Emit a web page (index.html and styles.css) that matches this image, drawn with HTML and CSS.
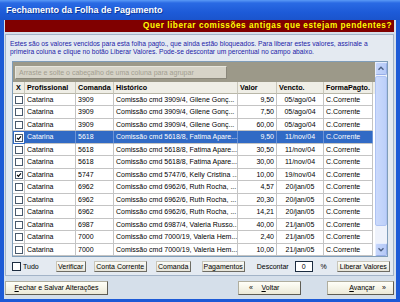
FILE: index.html
```html
<!DOCTYPE html>
<html>
<head>
<meta charset="utf-8">
<link rel="stylesheet" href="styles.css">
</head>
<body>
<div class="window">
  <div class="titlebar">Fechamento da Folha de Pagamento</div>
  <div class="client">
    <div class="banner">Quer liberar comissões antigas que estejam pendentes?</div>
    <div class="panel">
      <p class="desc">Estes são os valores vencidos para esta folha pagto., que ainda estão bloqueados. Para liberar estes valores, assinale a primeira coluna e clique no botão Liberar Valores. Pode-se descontar um percentual no campo abaixo.</p>
      <div class="grid">
        <div class="grid-main">
          <div class="groupbox"><span class="dragbox">Arraste e solte o cabeçalho de uma coluna para agrupar</span></div>
          <div class="row head">
            <div class="c cx">X</div><div class="c">Profissional</div><div class="c">Comanda</div><div class="c">Histórico</div><div class="c">Valor</div><div class="c">Vencto.</div><div class="c">FormaPagto.</div>
          </div>
          <div class="row"><div class="c cx"><span class="cb"></span></div><div class="c">Catarina</div><div class="c">3909</div><div class="c">Comissão cmd 3909/4, Gilene Gonç...</div><div class="c r">9,50</div><div class="c m">05/ago/04</div><div class="c">C.Corrente</div></div>
          <div class="row"><div class="c cx"><span class="cb"></span></div><div class="c">Catarina</div><div class="c">3909</div><div class="c">Comissão cmd 3909/4, Gilene Gonç...</div><div class="c r">7,50</div><div class="c m">05/ago/04</div><div class="c">C.Corrente</div></div>
          <div class="row"><div class="c cx"><span class="cb"></span></div><div class="c">Catarina</div><div class="c">3909</div><div class="c">Comissão cmd 3909/4, Gilene Gonç...</div><div class="c r">60,00</div><div class="c m">05/ago/04</div><div class="c">C.Corrente</div></div>
          <div class="row sel"><div class="c cx"><span class="cb on"><svg viewBox="0 0 8 8"><path d="M1.4 3.9 L3.2 5.8 L6.6 1.9"/></svg></span></div><div class="c">Catarina</div><div class="c">5618</div><div class="c">Comissão cmd 5618/8, Fatima Apare...</div><div class="c r">9,50</div><div class="c m">11/nov/04</div><div class="c">C.Corrente</div></div>
          <div class="row"><div class="c cx"><span class="cb"></span></div><div class="c">Catarina</div><div class="c">5618</div><div class="c">Comissão cmd 5618/8, Fatima Apare...</div><div class="c r">30,50</div><div class="c m">11/nov/04</div><div class="c">C.Corrente</div></div>
          <div class="row"><div class="c cx"><span class="cb"></span></div><div class="c">Catarina</div><div class="c">5618</div><div class="c">Comissão cmd 5618/8, Fatima Apare...</div><div class="c r">30,00</div><div class="c m">11/nov/04</div><div class="c">C.Corrente</div></div>
          <div class="row"><div class="c cx"><span class="cb on"><svg viewBox="0 0 8 8"><path d="M1.4 3.9 L3.2 5.8 L6.6 1.9"/></svg></span></div><div class="c">Catarina</div><div class="c">5747</div><div class="c">Comissão cmd 5747/6, Kelly Cristina ...</div><div class="c r">10,00</div><div class="c m">19/nov/04</div><div class="c">C.Corrente</div></div>
          <div class="row"><div class="c cx"><span class="cb"></span></div><div class="c">Catarina</div><div class="c">6962</div><div class="c">Comissão cmd 6962/6, Ruth Rocha, ...</div><div class="c r">4,57</div><div class="c m">20/jan/05</div><div class="c">C.Corrente</div></div>
          <div class="row"><div class="c cx"><span class="cb"></span></div><div class="c">Catarina</div><div class="c">6962</div><div class="c">Comissão cmd 6962/6, Ruth Rocha, ...</div><div class="c r">20,30</div><div class="c m">20/jan/05</div><div class="c">C.Corrente</div></div>
          <div class="row"><div class="c cx"><span class="cb"></span></div><div class="c">Catarina</div><div class="c">6962</div><div class="c">Comissão cmd 6962/6, Ruth Rocha, ...</div><div class="c r">14,21</div><div class="c m">20/jan/05</div><div class="c">C.Corrente</div></div>
          <div class="row"><div class="c cx"><span class="cb"></span></div><div class="c">Catarina</div><div class="c">6987</div><div class="c">Comissão cmd 6987/4, Valeria Russo...</div><div class="c r">40,00</div><div class="c m">21/jan/05</div><div class="c">C.Corrente</div></div>
          <div class="row"><div class="c cx"><span class="cb"></span></div><div class="c">Catarina</div><div class="c">7000</div><div class="c">Comissão cmd 7000/19, Valeria Hem...</div><div class="c r">2,40</div><div class="c m">21/jan/05</div><div class="c">C.Corrente</div></div>
          <div class="row"><div class="c cx"><span class="cb"></span></div><div class="c">Catarina</div><div class="c">7000</div><div class="c">Comissão cmd 7000/19, Valeria Hem...</div><div class="c r">10,00</div><div class="c m">21/jan/05</div><div class="c">C.Corrente</div></div>
        </div>
        <div class="scrollbar">
          <div class="sbtn"><svg viewBox="0 0 10 10"><path d="M2.5 6.3 L5 3.8 L7.5 6.3"/></svg></div>
          <div class="track"><div class="thumb"></div></div>
          <div class="sbtn"><svg viewBox="0 0 10 10"><path d="M2.5 3.8 L5 6.3 L7.5 3.8"/></svg></div>
        </div>
      </div>
      <div class="toolbar">
        <span class="cb tb-cb"></span><span class="lbl tudo">Tudo</span>
        <button class="btn b-ver">Verificar</button>
        <button class="btn b-cc">Conta Corrente</button>
        <button class="btn b-com">Comanda</button>
        <button class="btn b-pag">Pagamentos</button>
        <span class="lbl desc-lbl">Descontar</span>
        <span class="input">0</span>
        <span class="lbl pct">%</span>
        <button class="btn b-lib">Liberar Valores</button>
      </div>
    </div>
    <div class="footer">
      <button class="btn fbtn b-fechar"><u>F</u>echar e Salvar Alterações</button>
      <span class="spacer"></span>
      <button class="btn fbtn b-voltar"><span>«</span><span><u>V</u>oltar</span><span></span></button>
      <button class="btn fbtn b-avancar"><span></span><span><u>A</u>vançar</span><span>»</span></button>
    </div>
  </div>
</div>
</body>
</html>
```

FILE: styles.css
```css
html, body {
  margin: 0;
  padding: 0;
}
body {
  width: 400px;
  height: 302px;
  overflow: hidden;
  font-family: "Liberation Sans", Arial, sans-serif;
}
.window {
  width: 400px;
  height: 302px;
  background: #1c5ad6;
  display: flex;
  flex-direction: column;
}
.titlebar {
  height: 20px;
  line-height: 21px;
  padding-left: 6px;
  color: #fff;
  font-weight: bold;
  font-size: 9px;
  background: linear-gradient(#5a9af6 0, #2a6ae4 3px, #1d5bd8 60%, #1a54cc 100%);
  text-shadow: 1px 1px 0 #0e3a9a;
}
.client {
  flex: 1;
  margin: 0 4px 3px 4px;
  padding: 0 2px 0 1px;
  background: #d5dfea;
  display: flex;
  flex-direction: column;
}
.banner {
  height: 12px;
  line-height: 12px;
  background: #800000;
  color: #ffff00;
  font-weight: bold;
  font-size: 8.2px;
  letter-spacing: 0.55px;
  text-align: right;
  padding-right: 2px;
  white-space: nowrap;
}
.panel {
  margin-top: 2px;
  height: 242px;
  box-sizing: border-box;
  border: 1px solid #a3b4c8;
  background: #e4eaf1;
  display: flex;
  flex-direction: column;
}
.desc {
  margin: 5px 2px 0 4px;
  font-size: 6.7px;
  line-height: 7.6px;
  color: #1c1ca8;
}
.grid {
  margin: 6px 0 0 6px;
  width: 376px;
  height: 196px;
  box-sizing: border-box;
  border: 1px solid #7f9db9;
  display: flex;
  background: #fff;
}
.grid-main {
  width: 362px;
  display: flex;
  flex-direction: column;
}
.groupbox {
  height: 20px;
  background: #9c9989;
  padding: 4px 0 0 2px;
  box-sizing: border-box;
}
.dragbox {
  display: block;
  width: 212px;
  height: 13px;
  box-sizing: border-box;
  background: #d6d3c7;
  border: 1px solid #e8e6dc;
  border-right-color: #8a877a;
  border-bottom-color: #8a877a;
  color: #a29e90;
  font-size: 7px;
  line-height: 11px;
  padding-left: 3px;
  white-space: nowrap;
}
.row {
  display: grid;
  grid-template-columns: 12px 51px 38px 124px 39px 47px 49px;
  height: 12.5px;
  font-size: 7px;
  line-height: 11.5px;
  color: #000;
}
.row.head {
  height: 12px;
  font-weight: bold;
  background: #efeee6;
  font-size: 7.2px;
}
.row.head .c {
  border-right: 1px solid #c9c7ba;
  border-bottom: 1px solid #b9b7a8;
  line-height: 11px;
}
.c {
  box-sizing: border-box;
  border-right: 1px solid #c4c4c4;
  border-bottom: 1px solid #c4c4c4;
  padding: 0 2px;
  overflow: hidden;
  white-space: nowrap;
}
.c.r { text-align: right; }
.c.m { text-align: center; }
.c.cx {
  padding: 0;
  text-align: center;
}
.row.sel .c {
  background: #316ac5;
  color: #fff;
  border-right-color: #6d93d4;
}
.row.sel .c.cx {
  background: #fff;
  border: 1px solid #316ac5;
}
.cb {
  display: inline-block;
  width: 8px;
  height: 8px;
  box-sizing: border-box;
  border: 1px solid #4a5a6c;
  background: #fff;
  vertical-align: top;
  margin-top: 2px;
  position: relative;
}
.cb svg {
  position: absolute;
  left: 0;
  top: 0;
  width: 6px;
  height: 6px;
}
.cb svg path {
  fill: none;
  stroke: #000;
  stroke-width: 1.5;
}
.scrollbar {
  width: 12px;
  display: flex;
  flex-direction: column;
  background: #eef2fb;
}
.sbtn {
  height: 13px;
  box-sizing: border-box;
  background: linear-gradient(90deg, #c6d6fb, #b5c9f7);
  border: 1px solid #e6eeff;
  border-right-color: #97aee8;
  border-bottom-color: #97aee8;
  border-radius: 2px;
}
.sbtn svg {
  display: block;
  width: 10px;
  height: 11px;
}
.sbtn svg path {
  fill: none;
  stroke: #4d6185;
  stroke-width: 1.4;
}
.track {
  flex: 1;
  padding: 0;
  display: flex;
  flex-direction: column;
}
.thumb {
  margin-top: 1px;
  height: 150px;
  box-sizing: border-box;
  background: linear-gradient(90deg, #cbdafc, #bccff9);
  border: 1px solid #aec3f3;
  border-radius: 2px;
}
.toolbar {
  margin: 3px 0 0 6px;
  height: 12px;
  display: flex;
  align-items: center;
  font-size: 7px;
}
.tb-cb {
  margin-top: 0;
  width: 9px;
  height: 9px;
  border-color: #1c2c40;
}
.lbl {
  white-space: nowrap;
  color: #000;
}
.tudo { margin-left: 2px; }
.btn {
  font-family: "Liberation Sans", Arial, sans-serif;
  font-size: 7px;
  color: #000;
  height: 11px;
  padding: 0;
  box-sizing: border-box;
  background: linear-gradient(#fcfcf8, #e6e4d8);
  border: 1px solid #c8c6ba;
  border-right-color: #6e6c64;
  border-bottom-color: #6e6c64;
  white-space: nowrap;
  line-height: 9px;
}
.b-ver { margin-left: 17px; width: 30px; }
.b-cc { margin-left: 8px; width: 53px; }
.b-com { margin-left: 9px; width: 35px; }
.b-pag { margin-left: 11px; width: 43px; }
.desc-lbl { margin-left: 12px; }
.input {
  margin-left: 6px;
  width: 18px;
  height: 11px;
  box-sizing: border-box;
  border: 1px solid #1c2c40;
  background: #fff;
  text-align: center;
  line-height: 9px;
}
.pct { margin-left: 8px; }
.b-lib { margin-left: 10px; width: 53px; }
.footer {
  display: flex;
  padding-top: 5px;
}
.fbtn {
  height: 14px;
  line-height: 12px;
  background: linear-gradient(#fffff8, #ece9d8);
  border: 1px solid #b0ae9e;
  border-right-color: #5e5c54;
  border-bottom-color: #5e5c54;
}
.b-fechar { width: 103px; }
.spacer { flex: 1; }
.b-voltar {
  width: 63px;
  display: flex;
  justify-content: space-between;
  padding: 0 8px 0 10px;
}
.b-avancar {
  width: 67px;
  margin-left: 26px;
  display: flex;
  justify-content: space-between;
  padding: 0 7px 0 14px;
}
.b-voltar span, .b-avancar span { display: block; }
.b-voltar span:last-child { width: 4px; }
.b-avancar span:first-child { width: 0; }
```
